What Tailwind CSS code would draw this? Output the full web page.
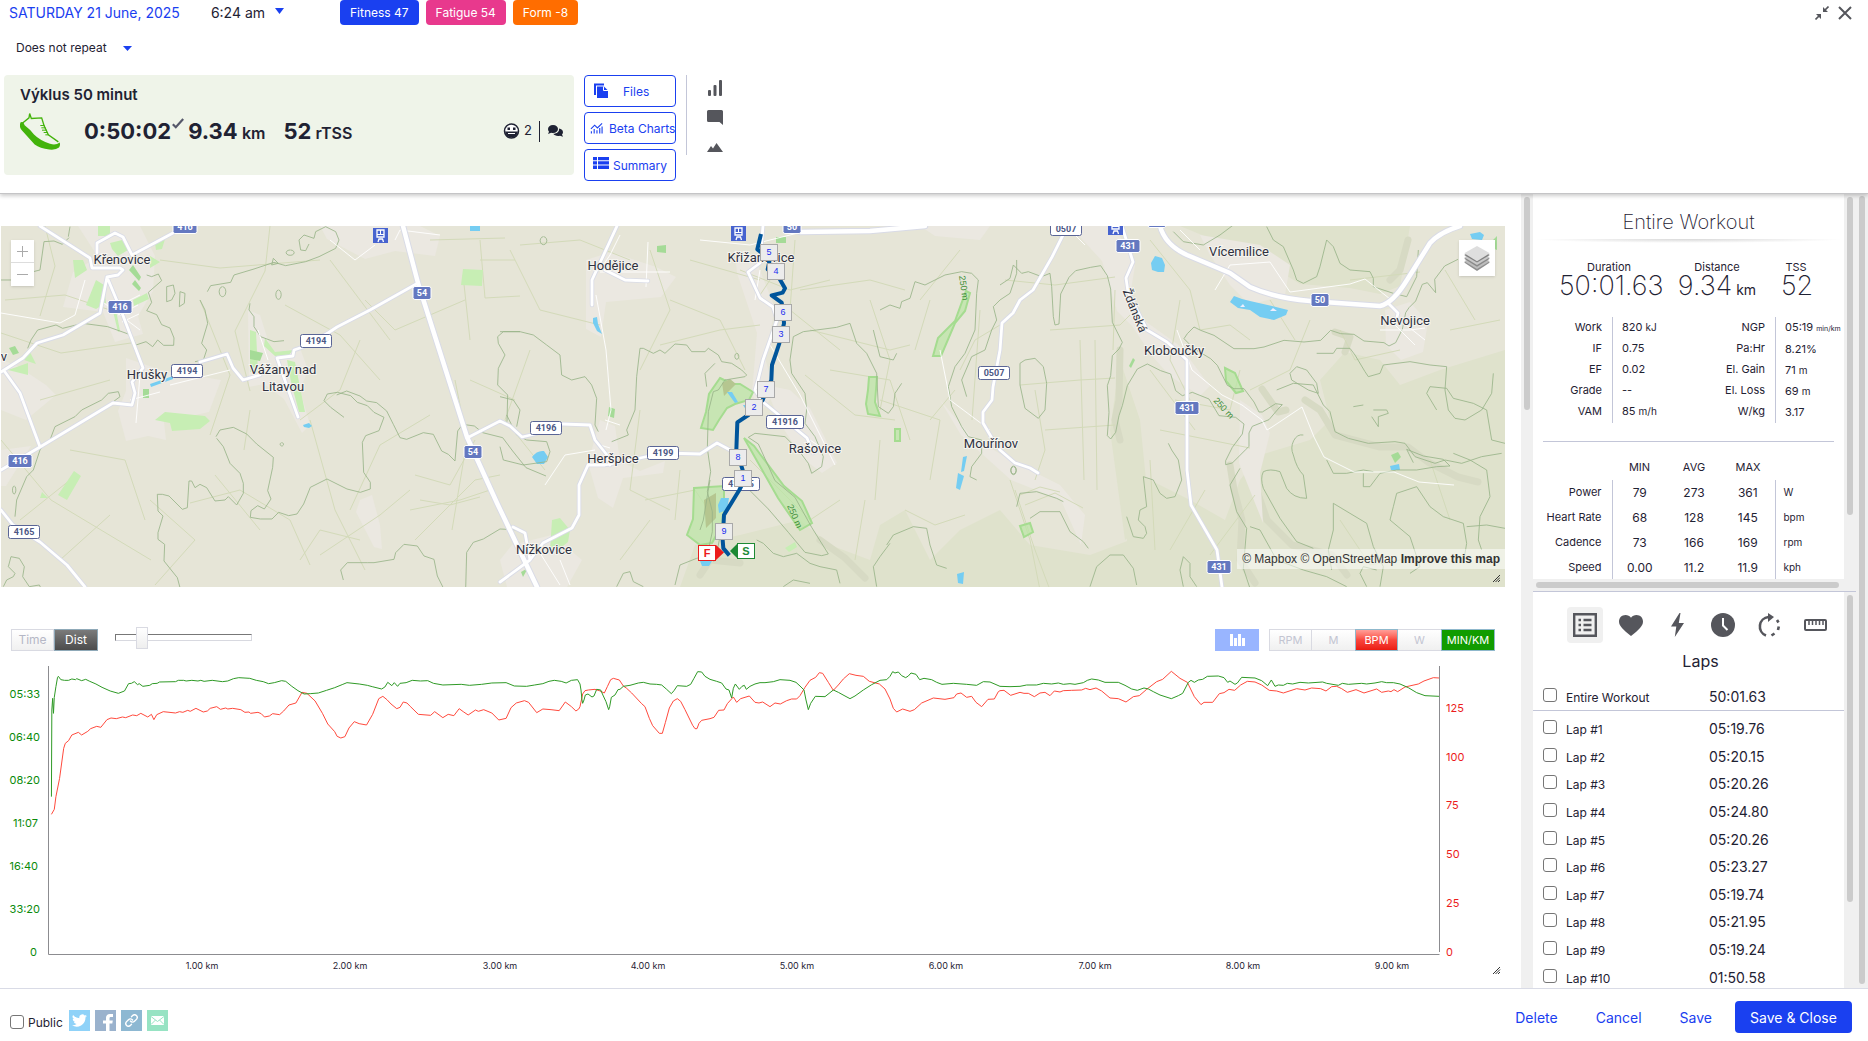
<!DOCTYPE html>
<html lang="en">
<head>
    <meta charset="UTF-8">
    <meta name="viewport" content="width=device-width, initial-scale=1.0">
    <title>Výklus 50 minut</title>
    <script src="https://cdn.jsdelivr.net/npm/@tailwindcss/browser@4"></script>
</head>

<body class="h-screen flex flex-col overflow-hidden bg-white font-['Inter',sans-serif] text-[#1f2233]">
    <header class="relative z-10 shrink-0 h-[194px] border-b border-[#c4c4c6] shadow-[0_2px_4px_rgba(0,0,0,0.2)]">
        <div class="flex items-start">
            <a href="#" class="ml-[9px] mt-[3px] text-sm leading-5 text-[#1a40f0]">SATURDAY 21 June, 2025</a>
            <button class="ml-[31px] mt-[3px] flex items-start text-sm leading-5">6:24 am
                <svg class="ml-2.5 mt-[5px] w-[9px] h-[6px]" viewBox="0 0 9 6" fill="#1a40f0"><path d="M0 0h9L4.500 6z"/></svg>
            </button>
            <div class="ml-14 flex gap-[7px] text-xs leading-[25px] text-white">
                <span class="px-2.5 rounded bg-[#1a40f0]">Fitness 47</span>
                <span class="px-2.5 rounded bg-[#e8398d]">Fatigue 54</span>
                <span class="px-2.5 rounded bg-[#ff6d00]">Form -8</span>
            </div>
            <div class="ml-auto mr-4 mt-1.5 flex gap-[9px] text-[#55565c]">
                <button aria-label="Collapse">
                    <svg class="w-[14px] h-[14px]" viewBox="0 0 14 14" fill="none" stroke="currentColor" stroke-width="1.600"><path d="M13.500.5 9 5M.5 13.500 5 9"/><path d="M8 1v5h5zM6 13V8H1z" fill="currentColor" stroke="none"/></svg>
                </button>
                <button aria-label="Close">
                    <svg class="w-[14px] h-[14px]" viewBox="0 0 14 14" fill="none" stroke="currentColor" stroke-width="2"><path d="M1 1l12 12M13 1L1 13"/></svg>
                </button>
            </div>
        </div>

        <button class="ml-4 mt-[15px] flex items-center text-xs leading-4">Does not repeat
            <svg class="ml-4 w-[9px] h-[5px]" viewBox="0 0 9 5" fill="#1a40f0"><path d="M0 0h9L4.500 5z"/></svg>
        </button>

        <div class="mt-[19px] ml-1 flex items-start">
            <div class="w-[570px] h-[100px] pl-4 pt-[9px] rounded bg-[#eff4e9]">
                <h1 class="text-[15px] leading-[22px] font-semibold">Výklus 50 minut</h1>
                <div class="flex items-center h-[50px]">
                    <svg class="w-10 h-[37px]" viewBox="0 0 120 110" fill="none">
                        <path d="M0 33Q-2 44 6 52L44 94Q60 106 88 109 108 111 117 103 122 96 119 88 108 97 90 92 60 82 42 64 30 48 14 36L10 28Q0 24 0 33z" fill="#43b30b"/>
                        <path d="M7 30 27 14 29 1 34 16 65 14 72 37 85 65 115 86" stroke="#43b30b" stroke-width="4"/>
                        <path d="M61 37h13M64 44h13M66 51h14M71 58h12M76 65h10" stroke="#43b30b" stroke-width="3"/>
                    </svg>
                    <span class="ml-6 text-[22px] font-bold">0:50:02</span>
                    <svg class="ml-px mb-4 w-3 h-[11px]" viewBox="0 0 12 11" fill="none" stroke="#55586a" stroke-width="2.200"><path d="M.8 6.200 3.800 9.200 11.200 1"/></svg>
                    <span class="ml-1 text-[22px] font-bold">9.34 <span class="-ml-px text-base font-semibold">km</span></span>
                    <span class="ml-[18px] text-[22px] font-bold">52 <span class="-ml-px text-base font-semibold">rTSS</span></span>
                    <span class="ml-auto mr-[11px] flex items-center">
                        <svg class="w-[17px] h-4" viewBox="0 0 17 16"><circle cx="8.500" cy="8" r="7" fill="#fff" stroke="#1f2233" stroke-width="1.500"/><path d="M2 8.500h13Q14 14.500 8.500 14.500T2 8.500z" fill="#1f2233"/><path d="M4.500 4.500h2.500v2.500H4.500zM10 4.500h2.500v2.500H10z" fill="#1f2233"/><path d="M5 10.500h7" stroke="#fff"/></svg>
                        <span class="ml-1 text-[13px]">2</span>
                        <span class="ml-[7px] h-[21px] w-px bg-[#1f2233]"></span>
                        <svg class="ml-2 w-[15px] h-3" viewBox="0 0 15 12" fill="#1f2233"><path d="M5 0c3 0 5 1.800 5 4s-2 4-5 4c-.6 0-1.200 0-1.800-.2L0 9l1-2.200C.3 6 0 5 0 4c0-2.200 2-4 5-4z"/><path d="M11 3.500c2.300.3 4 1.800 4 3.700 0 .9-.4 1.700-1 2.300l1 2.300-3-1c-3 .7-5.700-.3-6.700-2C9 8.600 11.500 6.700 11 3.500z"/></svg>
                    </span>
                </div>
            </div>
            <div class="ml-2.5 w-[92px] flex flex-col gap-[5px] text-xs text-[#1a40f0]">
                <button class="h-8 pl-2 flex items-center rounded border border-[#1a40f0]">
                    <svg class="w-4 h-4" viewBox="0 0 16 16"><path d="M2 12V1.500H11" fill="none" stroke="#1a40f0" stroke-width="2"/><path d="M4 3.500h7l4 4V15H4z" fill="#1a40f0"/><path d="M10.500 3.500v4H15" fill="none" stroke="#fff"/></svg>
                    <span class="ml-3.5 pt-0.5">Files</span>
                </button>
                <button class="h-8 pl-[5px] flex items-center whitespace-nowrap rounded border border-[#1a40f0]">
                    <svg class="shrink-0 w-[13px] h-3" viewBox="0 0 14 12" fill="none" stroke="#1a40f0" stroke-width="1.200"><path d="M1 7l4-4 3 3 5-5M1.500 12V9.500M4.500 12V7M7.500 12V8.500M10.500 12V6M13 12V4.500"/></svg>
                    <span class="ml-1.5 pt-0.5">Beta Charts</span>
                </button>
                <button class="h-8 pl-2 flex items-center rounded border border-[#1a40f0]">
                    <svg class="mb-1 w-4 h-3" viewBox="0 0 16 12" fill="#1a40f0"><path d="M0 0h4v3.300H0zM5 0h11v3.300H5zM0 4.300h4v3.300H0zM5 4.300h11v3.300H5zM0 8.600h4V12H0zM5 8.600h11V12H5z"/></svg>
                    <span class="ml-1 pt-0.5">Summary</span>
                </button>
            </div>
            <div class="ml-2.5 h-20 w-px bg-[#c3c6d8]"></div>
            <div class="ml-5 mt-[5px] flex flex-col items-center gap-3.5 text-[#55565c]">
                <button aria-label="Charts"><svg class="w-4 h-4" viewBox="0 0 16 16" fill="currentColor"><rect x="1" y="10" width="3" height="6" rx="1"/><rect x="6.500" y="5" width="3" height="11" rx="1"/><rect x="12" y="0" width="3" height="16" rx="1"/></svg></button>
                <button aria-label="Comments"><svg class="w-4 h-[15px]" viewBox="0 0 16 15" fill="currentColor"><path d="M1.500 0h13Q16 0 16 1.500V15l-3.500-3h-11Q0 12 0 10.500v-9Q0 0 1.500 0z"/></svg></button>
                <button aria-label="Map" class="pt-1"><svg class="w-4 h-[9px]" viewBox="0 0 16 9" fill="currentColor"><path d="M0 9l4-6 2 2.500L9.500 0 16 9H8.500L6.700 5.500 9 9z"/></svg></button>
            </div>
        </div>
    </header>

    <main class="flex-1 min-h-0 flex">
        <div class="flex-1 min-w-0 overflow-hidden">
            <section aria-label="Map" class="relative mt-8 ml-px mr-4">
                <svg id="map" class="block w-full" viewBox="1 226 1504 361" font-family="Roboto, sans-serif">
                    <defs>
                        <g id="minor-roads">
                            <path d="M40 226 90 258 92 268 120 268 123 270 118 275 107 277M97 253V243L115 233 123 237 132 255 173 233M107 277 122 313 143 368 132 382 135 393 132 405 113 403 40 447 1 470M107 277 100 313 63 335 37 343 23 358 1 372M5 372 20 393 40 447M1 510 13 525 40 542 67 565 85 587M200 362 227 354 233 368 243 380 260 375M298 417 277 358 293 356 294 350 303 347 328 333 337 327 370 310 418 283M467 438 500 421 510 426 522 437 535 434 562 424 590 425 595 440 607 455 610 465M588 465 605 465 640 458 663 453 700 454 717 443 730 450M588 465 579 485V515L572 528 543 543 530 560 500 582M513 527 525 533 530 560M617 226 592 280V305M605 270 625 280 648 281M763 226 760 263 748 272 760 298 773 307 777 320 763 360 758 380 755 390 763 402 807 438 813 453"/>
                            <path d="M1066 229 1052 257 1033 290 1020 300 1013 313 1002 323 1000 350 993 387 992 400 983 412V423L993 440 1000 450 1015 463 1030 468 1038 473M1122 226 1133 262 1126 278 1128 292 1147 330 1167 342 1187 360V470L1191 505 1217 550 1222 587M1388 303 1398 313 1396 321"/>
                        </g>
                        <path id="major-roads" d="M403 226 418 283 467 437 497 503 537 587M800 232 870 231 925 226M1160 226Q1165 245 1187 255L1230 273 1250 287Q1275 298 1310 301L1380 306Q1393 303 1407 280L1430 243Q1440 232 1460 226M866 226"/>
                    </defs>
                    <rect x="1" y="226" width="1504" height="361" fill="#e6e5d7"/>

                    <!-- forest tint -->
                    <g fill="#dfe2cc">
                        <path d="M1505 350 1440 370 1400 385 1380 360 1345 352 1320 380 1330 420 1310 440 1260 455 1240 480 1225 520 1190 500 1130 470 1125 587H1505z"/>
                        <path d="M680 587 695 545 740 535 800 520 830 545 870 560 880 525 905 510 930 560 960 530 1000 510 1030 545 1090 555 1130 540 1130 587z"/>
                        <path d="M1120 360 1140 420 1150 520 1125 540 1110 430z"/>
                        <path d="M1180 226h230l-10 60-20 8-30-6-50-4-40-25z"/>
                    </g>
                    <g fill="none" stroke="#d7dac4" stroke-width="7" stroke-linecap="round" stroke-linejoin="round">
                        <path d="M1120 350 1119 400 1115 420 1120 440M1230 465 1234 490 1242 520 1240 560 1255 583M1262 389l16 23 8-2M1305 400l15 10 15 25 45 12 28 0 20 15 30 15 20 5"/>
                        <path d="M1255 485l12 35 25 25 40 10 15 20M1335 332l15 5-5 15M1408 240l-8 30-10 10M820 540l25 18 20 20M700 575l10-15 30 3"/>
                    </g>

                    <!-- built-up areas -->
                    <g fill="#ebe8e1">
                        <path d="M78 226h62l15 30-2 35-15 25 5 18-28 8-12-30-40-5 10-35 25-15z"/>
                        <path d="M126 358l35 12 60 10-12 32-45 10 2 18-18-4-22 5-8-30 8-20z"/>
                        <path d="M248 310l12 5 12 38 28-5 8 22-8 20 10 35-8 8-18-34-20-15-15 3z"/>
                        <path d="M320 226h100l20 10-5 20-40-5-30 8-38-20z"/>
                        <path d="M360 500l12-5 8 30 2 24-8-2-18-35z"/>
                        <path d="M500 560l12-15 40-10 30 25-15 27h-60z"/>
                        <path d="M586 260l25-8 45 15 20 10-15 20-55 5-5 35-15-8z"/>
                        <path d="M600 420l15 6 5 35 20 10 25-10-2 12-40 5-10 30-15-10-10-35z"/>
                        <path d="M735 250l20 8 20 50-10 50 10 35-15 20-8-20 5-60-20-60z"/>
                        <path d="M765 385l25 5 20 18 15 30 12 25-15 10-20-15-22-35z"/>
                        <path d="M940 400l30 35 40 25 50 25 25 30-4 30-20-45-50-20-50-45z"/>
                        <path d="M1070 226h45l20 40-5 30 15 25 35 25 30 40-10 10-30-20-18-20-20-30-15-15-15-50z"/>
                        <path d="M1200 235l60 10 30 20-5 30-35 10-20-20-20-30z"/>
                        <path d="M1385 310l25-8 18 20-5 30-22 8-15-15z"/>
                        <path d="M1240 400l22 15 8 18-10 40 3 50-14-35-10-25z"/>
                        <path d="M920 226h70l-10 14-45-4z"/>
                        <path d="M1 450l30-4-25 40-5 0zM1 360l15 5 30 20 10 10-30 25-25-10z"/>
                    </g>

                    <!-- field boundaries -->
                    <g fill="none" stroke="#d3dab9" stroke-width="1">
                        <path d="M45 226l10 40-15 50M1 333l60 20 70-10M160 260l60 8 100-8M200 300l30 75-20 60M270 226l-5 45-30 60 15 60M70 450l55 10 20 60M1 440l50 60 100 60M150 500l45 40-40 45M190 503l50-13 50 30 20 45M215 475l45 55M330 260l60 80M365 300l30 30 70-30M285 305l55 30 40 45M300 420l40-30 20-50M310 420l25 90 30 60M350 510l30-65 50-30M415 475l35 10 25-45M410 510l50-10 30-10M320 555l60-40 30-25M455 380l12 60-15 90M430 240l75-2M463 275l7 65M480 240l5 58 35-2"/>
                        <path d="M510 250l30 60 60 15M530 350l-25 70 40 50M520 245l60-5 50 20M650 250l20 60-30 60M670 300l50 20 25 50M690 260l70 20M660 345l60-15 40-5M640 410l-10 80 40 20M645 500l50-10 20 30M680 470l-5 50M740 270l50 20 40-10M795 240l-5 70 50 40M800 290l70-10 35 10M810 330l80 20 20-5M830 370l60 10 20 60M805 375l50 40 40 5M870 300l20 60-10 50M880 400l60 20-10 60M750 460l60 60 30-20M880 440l-5 60M960 250l-40 50M930 300l-15 50M980 310l-8 110M955 390l-25 30"/>
                        <path d="M1005 280l50 5 60-8M1050 330l70-5 10-10M1020 385l60-5 35-2M1045 430l70-5M1080 340l4 140M1095 340l2 150M1115 290l-2 60M1035 390l10 60-10 30M1150 370l45 60M1180 300l-10 60 20 40M1200 330l30-5 20 15M1270 300l25 40M1240 370l-10 40-55-10M1310 320l-20 50-40 20M1350 280l70-8M1340 330l15 30 45-10M1445 270l30 50M1150 240l40 50 10 40M1160 430l90 18M1150 460l5 90M1170 550l35-60M1210 555l45-60M1430 460l20 60M1340 520l30 45 60-10M1450 330l50-10M1010 480l20 60 10 50M1015 490l20 60 15 40M1020 495l20-8 20 5M1025 505l30-12 28 15"/>
                        <path d="M415 540l60-60 25-5M420 500l30 5 30-8M300 560l20-30 40 10M20 520l50-40M60 560l50-45M250 410l-6 40M480 260l35 0M470 380l45 20M5 300l60-5 60 20M40 400l70-20M620 560l30-40M855 560l10-60M905 510l30 15 30-10M960 370l15-30 25-15M780 265l-20 30"/>
                    </g>

                    <!-- parks -->
                    <g fill="#c7eeb4">
                        <path d="M98 226h12v10l-12 0zM110 243l12-3 6 10-10 6-6-7zM73 260l10 0 4 10-12 8zM96 280l8 5 2 18-10 6-10-4z"/>
                        <path d="M155 243l10-4-3 10-6 1zM150 256l10 6-10 6zM133 300l14-7 2 6-15 7zM110 300l16-8M115 305l5 26-2 1-6-25zM8 370l20-7 0 12zM30 352l6 12-12-4z"/>
                        <path d="M250 330l6 2 2 40-8 0zM265 338l10 14 18-2-4 5-14 1-11-10zM287 360l8 2 10 50-6 0-8-30z"/>
                        <path d="M155 420l10-8 40 4 5 5-10 8-28 2-2-8zM58 495l16-24 7 5-14 24zM42 492l6 6-8 0zM461 285l2-16 20 1-1 16z"/>
                        <path d="M552 520l8-2 10 12-2 12-10 8-8 0zM785 548l10-6 2 5-8 5z"/>
                    </g>
                    <g fill="#a5db97"><path d="M129 270l4-5 8 12-2 4zM132 284l3-4 6 8-2 3zM250 350l13 3-3 8-10-2zM143 389h6v9h-6zM9 348l6-2 4 7-6 2zM657 246l9-1v8l-9-1zM609 407l6 2-1 9-6-2zM521 572l7-4-5 9zM776 237h10v6h-10zM1129 366l4-8 2 2-4 8zM1391 455l7-3 3 5-6 6zM1492 241l5-5v14l-5-2z"/></g>

                    <!-- protected woodland -->
                    <g fill="#b9e6a4" fill-opacity=".7" stroke="#a5dc90" stroke-width="2">
                        <path d="M720 378l12 6 8 0 13 8-4 8-14 4-8 4-8 12-6 10-12-2 5-16 3-18z"/>
                        <path d="M744 438l10 8 30 40 18 15 10 22-12 7-22-32z"/>
                        <path d="M694 488l30-2 0 35-12 22-12 2-13-10 6-16z"/>
                        <path d="M966 291l4 2-5 18-10 12-14 33-8 0 5-18 17-17z"/>
                        <path d="M869 377l8 0-2 25 5 14-12-2-2-10 2-14zM895 429h5l0 12-5 0z"/>
                        <path d="M1225 368l10 5 8 18-7 2-10-12zM1020 526l10-3 3 9-9 5z"/>
                    </g>
                    <path d="M704 500l12-7 0 25-10 10zM722 383l8-4 6 5-12 12z" fill="#b5c690"/>

                    <!-- water -->
                    <g fill="#75cdf2">
                        <path d="M150 384l23-8v3l-22 8zM303 425l6-2 3 3-3 2-5-1zM470 226h10v5h-10zM532 457q5-7 12-6l4 6-4 7-7 0zM593 318l4-1 1 7 4 10-5-3-4-8z"/>
                        <path d="M727 392l5 0 6 10-3 1zM743 405h5v8zM721 498l8 0-2 12-8 3-1-8zM700 561h12l-3 5-7 0zM963 457l4-1-3 15-3 1zM958 473l6 3-4 14-4-2zM957 574l7-2-1 12-5-1z"/>
                        <path d="M1230 302l4-6 8 3 8 2 22 5 16 4-2 5-12 5-14-3-10-7-12-2zM1151 263l4-7 7 2 3 7-1 7-6 0-6-2zM1470 234l10-2 4 3-2 5-10-1zM1390 466l9-2 1 6-9 0z"/>
                    </g>
                    <path d="M1240 307h5l-2-3zM1270 311h7l-4-3z" fill="#eeeeff"/>

                    <!-- contour lines -->
                    <g fill="none" stroke="#97b388" stroke-linejoin="round">
                        <g transform="translate(0 220) scale(.333333)" stroke-width="2.500">
                            <path d="M0 180h50l30-20 40-10 12-85 30-2 25 10 20-20M205 50l5-30M440 165l15 5 20-8 10 20-40 35 10 30-15 25 30 12 15 30 25 10 12 30-1 22-30 0-18-16-15 20-20-15-30 10-15-30-70-25-75-10-60 15-20-10-55 15-20 30-10 25M600 240l15 30 8 40-18 60 15 20-10 30-25 5M622 215l10-18 60-10 10-22 60-18 60-20 35 10 60-12 40-15 50-25 10-25-10-25-30-15-30 15-5 20-30-10-15 15 5 30 15 2 10-20M750 250l-3 20 15 20 0 30 20 30 40 15 30-3"/>
                            <path d="M648 650l12-20 40-8 40 20 30 30 50 40-2 30-15 70 10 25-20 30-20-10-20 15-2 20 30 5 35 0 20-20 30 10 25-5 20-30 20-50 50-25 60 30 40 10 30-10 0-20-20-30-4-90 10-20 40-15 15-40-30-15-20-20-30-10-20-20-40-10-30 5-10 20 20 20 40 30M1010 525l30-12 40 15 20 15 30 5 30 25 20 40 20 40 20 5 50-20 30 5 25 50 20 10 20 20 8-90 15-20 35 5 25 20 60 15 30 40 40 50 60 25"/>
                            <path d="M650 655l20 25 20 50 30 30 10 30 0 30-20 35-25-25-10 10-30 3-25-40-20-10-15 10-10-20-8 0-5 80-15 5-40-40-20-5-15 0 2 50 15 15-15 50 0 20 20 15-2 50 40 50 8 30-50 10-20 40M1560 335h-50l-17 15 2 20 20 35-20 40-2 50 30 30-2 80M1560 930l-60-3-50 30-30 10-20 30-3 110M1030 1080l-8-30 20-22 60 0 20 0 60-10 5-20 25-25 40 5 20 30 30 10 10 50 20 40M45 890l5-50 30-70 20-20 20-60 30-30 15-40 60-30 20-20 60-30 20-20 30-5 5 15-20 15M10 1100l10-20 20-10 5-10-20-20 8-30 25 5 15 25-5 30 20 30 30-5 10 20"/>
                            <path d="M667 200a10 15 0 1 0 1 0M820 115l15 15-20 5zM870 90a12 8 0 1 0 1 0M835 210a8 14 0 1 0 1 0M845 668a5 5 0 1 0 1 0M42 798a5 12 0 1 0 1 0M500 200l20-5 5 25-10 20-15 5zM540 215l15 5-2 30-15 10z"/>
                        </g>
                        <g transform="translate(500 220) scale(.333333)" stroke-width="2.500">
                            <path d="M0 335h60l40 10 40 30 40 30 5 60 30 15 40-10 20 25 15 40-5 80 10 20M335 665l50-20-5-15 25-60 5-100 10-85 10 0 30 15 20-10 15 10 30-28 35 3 15 20 40 0 10-10 30 20 10 20 30 5 30 20 15 15-5 5-60 10-20 30-15 5-15 60-3 110 10 70-10 60 15 60 0 60-15 70 20 20M710 400a6 9 0 1 0 1 0M870 420l10-70 30-15 40-5 60-8 40-12 20 60 30 30 30 60 5 100 30 20 15-20 5-40 20-30M870 420l5 40 40 60 5 50-5 40 30 40 25 60-5 30-30 20-10-30-30-40-40-40-90-10-20 12 30 20 50 110 60 50 50 90 50 80-20 5-50-10-50-60-60-70-60-60-30 5M1140 270l30-15 30 10 5-20 25-10 15-50 30 10 60-30 50-10 30 5 20 20-5 40-5 110-30 70-30 40-20 60 10 60 30 60 20 30 40 10 0 40-30 40-5 30 20 10"/>
                            <path d="M0 530l40 10 20 30-10 50M0 680l10 40 60 15 70-10 10-30-10-30-60-5-30-15-30-60M130 50a10 12 0 1 0 1 0M620 500l-5-40 30-30M630 780l-20 120-10 30M660 950l-10 50-60 15-50 20-15 60M770 960l20 10 30 30 30 10 40-10 40 30 30 10 50 10 10 40M1160 975l20-30 60-25 40 5 10 50 20 60 30 10M1130 1100l-10-60 20-30 30-40M1400 530l-15-50 30-70 40-20 20-60 15-30-10-40 20-20 30-20 20-60 0-40M1190 400l-10 20-40-10-20-80M1540 740a8 12 0 1 0 1 0M850 1100l30-20 50 10M350 1100l20-40 20-5 10 30 30 15"/>
                        </g>
                        <g transform="translate(1000 220) scale(.333333)" stroke-width="2.500">
                            <path d="M0 195l30-20 10-40 25 25 20-5 40 15 25-10 5 40 5 90 5 25 12-3 5-90 25-50 20-20 45-10 30-5 20 30 10 40 5 100 30 60-10 20-20 20-5 60-10 30 5 80-5 70 10 10 15-20 10-50 10-30 15-60 30-50 30-15 40 20 30 10 15 50 20 15 30-10 50 20 30 50 50 5 25 20-5 30-30 40-20 40 0 12 20-5 40-40 10-10 0-40 10-20 50-20 30-35 10-10-20-3-40 25-10 0-15-30-30-40-30 0-20-10-30-60-20-20-50-30-30-30 10-15 20-20 20 10 40 15 60 40 60 0 30-5 60-20 60 5 50-5 30-30 30 10 40 2 30 20 60 5 15 10 20-10 20-40 10-50 10-15 20-20 20-50 15-5 25 30-3-40 30-40 40-20M520 35l30 30 60 10 50-30 40-30M800 20l20 40 30 20 30 70 10 30 20 10 40-20 10-30 20-80 20 20 20 50 30 20 60 5 10 20 0 25 60 20 40 10 30-60 5-80"/>
                            <path d="M870 460l20-20 30 10 30 40 5 30-30-10-50-30zM950 400l50 0 10-15 40 0 15 20 30 50 10 15 35-10 10-25 80-10 60 10 50 5-5 70 10 60 20 25 30 5 50-30 30-50 5-60M830 510l50-20 60 5 30 60 20 20 15 60 40 20 60 15 80-5 30 5 30 40 60 20 30-10 50 10 60-20 60-10M1060 560l30-5M1120 570l40 0 5 10-30 10 0 30-20-30M1515 670l-40-10-15-90-40-20-60-15-20-30-50-5-10 20 30 50M980 720l20 40 40 0 50-10 30 5M1090 760l0 40 20 0 30-40 50-10 60 0 60-10 40-2-20-20-60-10-50-20 20 40M1360 700l50 20 50 30 10 80-30 60-5 70 10 30M720 745l-30 50 20 80 30 50-5 60-5 60 20 60 30 30M750 920l30 10 50 90 80 30 70 20 60 30"/>
                            <path d="M910 645a30 40 0 0 0-30 60q10 40 30 60l10 70q-40 0-60-30l-20-50q-30-10-50 0-10 20 0 50l50 90 50 70 50 20M1000 850l50 30 50 30 20 70 30 60-10 60M1000 850l0 80-15 60 10 60M1180 860l-10 40 60 50 30 90-30 20M1180 860l10-40 60-20 40 60 40 30 60 20 10 60-10 60M1400 920l60-5 55 10M430 770l10 90-20 10-5 30 20 20 5 20-10 15-30-5-20-60M430 770l30 10 20 40 20 15 25-5 20-50-10-60-20-30-10-20M60 430l15-10 30-5 25 25 10 50-5 80-20 25-40-30-15-70zM90 895l30-20 60 0 30 60 40 30 15 20M50 860l10-40 50-5 60 20 20 10M40 738a8 12 0 1 0 1 0M270 1100l20-60 40-35 40 0 30 40 10 50M550 1100l-10-50 10-40 20 20 0 40 20 30M1100 1100l-20-40 10-20 40 10"/>
                        </g>
                    </g>

                    <!-- small lanes -->
                    <g fill="none" stroke="#fff" stroke-width="1" stroke-opacity=".9">
                        <path d="M85 280l-10 35-15 8-59-10M110 310l30-15M118 315l20-10M122 322l17-8M100 300l40 30M140 375l-4 48M130 400l30-8M170 385l60-15M258 330l10 30M600 272l40 0 30 0M648 242l-2 45M620 235l-10 20-10 15M596 295l10 55 5 60-5 20M605 420l15 5M600 445l10 3M545 485l20-30 30-5M535 545l25 40M560 560l10 25M770 345l30 50 20 40 15 30M810 440l15 10M940 350l10 50 40 30M1215 290l15-25 40-3 20 30 60-8 15-5 25 20M1180 230l20 20M1177 330l15 40 30 25 20 10 20 15 5 10 5-3 30-20 12 30 10 20 30 15 40 0 25 10 35 3M1380 330l30 0 15-2M1395 325l20 20M1400 320l25 20M330 240l25 20 20-15M395 240l5-10 40 5M1075 235l10 10M700 240l50 5 60-15M760 270l-5 30"/>
                    </g>

                    <!-- roads -->
                    <g fill="none" stroke-linejoin="round" stroke-linecap="round">
                        <use href="#minor-roads" stroke="#d9dbe6" stroke-width="4.500"/>
                        <use href="#major-roads" stroke="#d9dbe6" stroke-width="6.500"/>
                        <use href="#minor-roads" stroke="#fff" stroke-width="2.800"/>
                        <use href="#major-roads" stroke="#fff" stroke-width="4.500"/>
                    </g>

                    <!-- place names -->
                    <g fill="#2f3140" stroke="#f5f4ef" stroke-width="2" paint-order="stroke" font-size="13" text-anchor="middle">
                        <text x="122" y="264">Křenovice</text>
                        <text x="147" y="379">Hrušky</text>
                        <text x="283" y="374">Vážany nad</text>
                        <text x="283" y="391">Litavou</text>
                        <text x="4" y="361">v</text>
                        <text x="613" y="270">Hodějice</text>
                        <text x="761" y="262">Křižanovice</text>
                        <text x="613" y="463">Heršpice</text>
                        <text x="815" y="453">Rašovice</text>
                        <text x="544" y="554">Nížkovice</text>
                        <text x="991" y="448">Mouřínov</text>
                        <text x="1239" y="256">Vícemilice</text>
                        <text x="1405" y="325">Nevojice</text>
                        <text x="1174" y="355">Kloboučky</text>
                        <text transform="translate(1131 312) rotate(68)" font-size="12">Ždánská</text>
                    </g>
                    <g fill="#3f8f3a" font-family="Liberation Sans, sans-serif" font-size="9">
                        <text transform="translate(959 276) rotate(82)">250 m</text>
                        <text transform="translate(787 506) rotate(66)">250 m</text>
                        <text transform="translate(1213 401) rotate(47)">250 m</text>
                    </g>
                    <g id="shields" font-size="9" font-weight="700" text-anchor="middle"></g>
                    <g id="station"><rect x="373" y="228" width="15" height="15" fill="#4763cf"/><path d="M377 230h7v7h-7zM378 242l1-3h3.500l1 3" fill="none" stroke="#fff" stroke-width="1.300"/><path d="M380.500 230v4M377 234.500h7" stroke="#fff"/></g>
                    <use href="#station" x="358" y="-2"/>
                    <use href="#station" x="735" y="-8"/>

                    <!-- recorded track -->
                    <polyline transform="translate(500 220) scale(.333333)" points="783,42 772,88 800,110 808,125 803,148 835,170 855,205 848,218 815,226 845,248 850,275 852,310 838,370 828,400 816,435 814,480 800,510 788,540 745,585 712,607 709,690 728,750 728,790 718,810 672,885 668,960 670,985 688,1006" fill="none" stroke="#00559b" stroke-width="12" stroke-linejoin="round"/>
                    <g id="splits" font-family="Liberation Sans, sans-serif" font-size="9" text-anchor="middle"></g>
                    <g font-family="Liberation Sans, sans-serif" font-size="11" font-weight="700" text-anchor="middle">
                        <path d="M716 545l8 7.500-8 7.500z" fill="#ec1c1c"/><rect x="698.500" y="545.500" width="17" height="15" fill="#fff" stroke="#ec1c1c"/><text x="707" y="557" fill="#ec1c1c">F</text>
                        <path d="M738 543l-8 8 8 8z" fill="#1d8a34"/><rect x="737.500" y="543.500" width="17" height="15" fill="#fff" stroke="#1d8a34"/><text x="746" y="555" fill="#1d8a34">S</text>
                    </g>
                </svg>
                <div class="absolute left-2.5 top-3.5 w-[23px] flex flex-col bg-white shadow">
                    <button aria-label="Zoom in" class="h-[23px] flex items-center justify-center border-b border-[#dddddd]"><svg class="w-[11px] h-[11px]" viewBox="0 0 11 11" stroke="#aaaaaa"><path d="M5.500 0v11M0 5.500h11"/></svg></button>
                    <button aria-label="Zoom out" class="h-[23px] flex items-center justify-center"><svg class="w-[11px] h-[11px]" viewBox="0 0 11 11" stroke="#aaaaaa"><path d="M0 5.500h11"/></svg></button>
                </div>
                <button aria-label="Layers" class="absolute right-2.5 top-3.5 w-9 h-9 flex items-center justify-center bg-white shadow">
                    <svg class="w-[26px] h-[25px]" viewBox="0 0 78 76"><path d="M0 50l39 26 39-26-39-20z" fill="#8f8f8f"/><path d="M0 46l39 24 39-24-39-20z" fill="#bdbdbd"/><path d="M0 39l39 24 39-24-39-20z" fill="#8a8a8a"/><path d="M0 34l39 24 39-24-39-20z" fill="#c9c9c9"/><path d="M0 27l39 23 39-23-39-22z" fill="#808080"/><path d="M0 22l39 24 39-24L39 0z" fill="#dedede"/></svg>
                </button>
                <p class="absolute right-0 bottom-[18px] h-5 px-[5px] bg-white/50 font-['Liberation_Sans',sans-serif] text-xs leading-5 text-[#333]">
                    <a href="#">© Mapbox</a> <a href="#">© OpenStreetMap</a> <a href="#" class="font-bold">Improve this map</a>
                </p>
                <svg class="absolute right-[5px] bottom-[5px] w-[7px] h-[7px]" viewBox="0 0 7 7" stroke="#333"><path d="M0 7l7-7M2.500 7L7 2.500M5 7l2-2"/></svg>
            </section>

            <section aria-label="Chart" class="ml-px mr-4 mt-[42px]">
                <div class="flex items-start h-[31px] px-2.5 text-[11px]">
                    <div class="flex h-[22px]">
                        <button class="w-[43px] border border-[#d9dae2] bg-linear-to-b from-white to-[#f0f0f0] text-[#b5b7c6] text-xs">Time</button>
                        <button class="w-11 border border-[#8fa9b8] bg-linear-to-b from-[#7b7b7b] to-[#4c4c4c] text-white text-xs">Dist</button>
                    </div>
                    <div class="relative ml-[17px] mt-[5px] w-[137px] h-[7px] border-t border-l border-t-[#777] border-l-[#777] border-b border-r border-b-[#d8d9e0] border-r-[#d8d9e0]">
                        <input type="range" aria-label="Smoothing" value="18" class="absolute inset-0 w-full opacity-0">
                        <span class="absolute left-5 -top-2 w-3 h-[22px] border border-[#d9dae2] bg-linear-to-b from-white to-[#eeeeee]"></span>
                    </div>
                    <button aria-label="Bar chart" class="ml-auto w-11 h-[22px] flex items-center justify-center bg-[#99b5ff]">
                        <svg class="w-[15px] h-3" viewBox="0 0 15 12" fill="#fff"><path d="M0 0h3v12H0zM4 4h3v8H4zM8 0h3v12H8zM12 4h3v8h-3z"/></svg>
                    </button>
                    <div class="ml-2.5 flex h-[22px]">
                        <button class="w-[43px] border border-[#d9dae2] bg-linear-to-b from-white to-[#f0f0f0] text-[#c3c5d2]">RPM</button>
                        <button class="w-[43px] border-y border-[#d9dae2] bg-linear-to-b from-white to-[#f0f0f0] text-[#c3c5d2]">M</button>
                        <button class="w-[43px] border border-[#8fb8cc] bg-linear-to-b from-[#ff9d98] via-[#f9453c] to-[#ea1a10] text-white">BPM</button>
                        <button class="w-[43px] border-y border-[#d9dae2] bg-linear-to-b from-white to-[#f0f0f0] text-[#c3c5d2]">W</button>
                        <button class="w-[54px] border border-[#8fb8cc] bg-[#119c00] text-white">MIN/KM</button>
                    </div>
                </div>
                <svg class="block w-full" viewBox="1 660 1504 320" font-family="Inter, sans-serif" font-size="11">
                    <path d="M48.500 666v288.500h1391M1439.500 666v286" fill="none" stroke="#8c8c90"/>
                    <g fill="#0a8a0a" text-anchor="end">
                        <text x="40" y="698">05:33</text><text x="40" y="741">06:40</text><text x="40" y="784">08:20</text><text x="38" y="827">11:07</text><text x="38" y="870">16:40</text><text x="40" y="913">33:20</text><text x="37" y="956">0</text>
                    </g>
                    <g fill="#ec1c1c">
                        <text x="1446" y="712">125</text><text x="1446" y="761">100</text><text x="1446" y="809">75</text><text x="1446" y="858">50</text><text x="1446" y="907">25</text><text x="1446" y="956">0</text>
                    </g>
                    <g fill="#1f2233" font-size="9" text-anchor="middle">
                        <text x="202" y="969">1.00 km</text><text x="350" y="969">2.00 km</text><text x="500" y="969">3.00 km</text><text x="648" y="969">4.00 km</text><text x="797" y="969">5.00 km</text><text x="946" y="969">6.00 km</text><text x="1095" y="969">7.00 km</text><text x="1243" y="969">8.00 km</text><text x="1392" y="969">9.00 km</text>
                    </g>
                    <g fill="none" stroke="#ff4a3d">
                        <polyline vector-effect="non-scaling-stroke" transform="translate(0 610) scale(.408163 .333333)" points="126,613 133,598 137,560 146,505 156,415 160,400 168,392 176,375 192,367 200,375 215,364 222,356 237,349 247,352 262,329 272,324 285,326 300,321 308,323 325,315 335,317 345,310 362,321 371,313 377,329 384,314 400,305 430,309 440,305 448,307 460,301 466,304 480,295 498,306 508,303 515,295 531,290 540,298 553,294 558,297 570,295 590,299 600,307 610,306 614,310 632,307 640,311 648,321 660,318 668,311 685,314 695,303 708,285 725,279 740,247 752,250 772,273 790,310 803,342 820,365 826,379 835,384 845,380 855,354 868,335 880,341 898,345 913,313 928,266 938,259 948,269 958,282 972,296 980,292 988,276 997,279 1005,289 1025,313 1055,316 1065,305 1085,323 1098,313 1112,317 1125,296 1135,305 1147,315 1165,300 1172,304 1185,299 1205,309 1222,330 1240,325 1252,293 1265,279 1285,272 1295,277 1315,308 1330,297 1350,299 1370,302 1385,276 1400,290 1411,303 1418,297 1421,290"/>
                        <polyline vector-effect="non-scaling-stroke" transform="translate(560 610) scale(.333333)" points="60,290 68,252 75,242 85,240 105,238 118,242 133,249 142,230 152,209 160,205 178,210 190,228 200,235 215,249 245,281 255,290 268,325 278,347 298,370 307,370 316,338 328,294 340,273 352,266 362,274 375,299 398,346 405,356 411,356 417,340 425,331 450,326 462,322 476,301 492,300 502,281 520,261 530,277 542,266 568,258 585,277 597,279 608,276 630,290 645,279 661,282 680,272 695,267 710,267 720,257 735,232 750,211 767,202 778,188 788,190 805,217 820,241 835,225 850,207 868,191 888,196 910,199 928,214 958,222 975,237 990,267 1000,295 1010,306 1028,297 1050,304 1063,299 1085,279 1120,264 1155,268 1182,263 1190,252 1203,249 1220,262 1235,259 1248,277 1265,290 1284,268 1303,267 1315,245 1320,242"/>
                        <polyline vector-effect="non-scaling-stroke" transform="translate(1000 610) scale(.333333)" points="0,242 12,241 32,256 60,247 72,250 85,250 103,260 120,249 135,247 150,257 163,243 180,246 190,242 215,241 245,240 257,235 270,239 288,234 305,243 330,264 355,266 378,276 400,260 418,257 440,238 470,215 488,208 514,184 540,205 562,217 583,260 603,284 612,277 638,277 658,251 672,248 687,238 704,241 722,225 742,214 765,216 785,225 808,241 830,243 850,249 890,236 915,240 935,234 962,236 978,243 995,230 1010,229 1025,236 1042,247 1068,239 1092,249 1130,237 1145,247 1165,243 1173,245 1182,239 1193,245 1215,231 1255,222 1272,213 1300,203 1317,204"/>
                    </g>
                    <g fill="none" stroke="#2f9a26">
                        <polyline vector-effect="non-scaling-stroke" transform="translate(0 610) scale(.408163 .333333)" points="126,560 127,300 129,265 131,310 133,262 137,230 141,202 143,199 149,209 158,211 168,211 176,207 185,209 188,206 200,212 210,208 220,214 235,222 250,232 270,243 290,250 305,243 315,221 322,220 329,215 337,224 341,221 350,229 367,226 373,221 385,220 391,216 430,215 437,211 450,211 456,213 470,211 485,213 492,211 500,214 520,211 545,215 558,213 572,206 585,203 612,205 628,211 645,215 658,221 672,218 690,212 700,214 715,229 730,242 745,252 760,251 780,249 800,241 820,233 840,223 850,218 880,222 900,226 912,230 935,237 943,231 950,217 960,227 966,218 974,229 980,220 995,218 1010,211 1030,213 1048,212 1062,220 1085,225 1130,223 1150,226 1180,223 1205,219 1240,218 1260,228 1290,229 1310,225 1330,221 1345,214 1358,211 1375,214 1387,219 1400,211 1415,209 1421,222"/>
                        <polyline vector-effect="non-scaling-stroke" transform="translate(560 610) scale(.333333)" points="60,222 63,240 66,270 68,280 72,270 76,255 84,252 96,261 102,258 110,238 122,240 130,258 138,275 146,299 149,290 154,262 165,255 174,239 180,238 190,229 210,226 235,219 250,217 270,222 290,223 305,225 320,238 334,251 342,242 352,227 380,229 392,223 402,205 413,185 425,186 435,199 450,208 470,214 485,219 498,237 507,240 515,264 520,235 526,222 538,238 546,229 553,226 559,238 570,229 585,222 600,218 615,218 640,215 660,209 690,211 708,217 720,228 732,240 738,270 745,299 752,280 766,259 795,260 820,240 835,247 855,258 870,266 885,258 910,240 935,224 960,211 980,209 990,199 998,185 1005,189 1015,186 1025,197 1037,203 1045,198 1053,189 1068,193 1079,209 1092,205 1115,209 1130,217 1146,223 1180,220 1220,223 1250,226 1270,215 1290,216 1320,229"/>
                        <polyline vector-effect="non-scaling-stroke" transform="translate(1000 610) scale(.333333)" points="0,229 30,230 60,229 80,225 110,225 130,220 155,222 175,219 190,223 210,221 225,223 250,218 262,211 275,207 295,210 315,217 355,217 375,226 395,237 412,241 432,234 445,237 460,245 480,255 514,266 535,257 548,250 565,217 573,211 583,217 595,210 608,208 622,199 655,198 672,203 683,217 690,213 705,223 712,219 725,202 765,204 785,212 803,227 814,210 825,229 835,225 850,226 862,220 878,222 900,217 925,219 968,216 980,220 1015,226 1027,220 1045,223 1085,220 1100,222 1125,219 1145,215 1160,218 1180,218 1200,222 1225,233 1250,248 1275,257 1317,259"/>
                    </g>
                    <path d="M1493 974l7-7M1495.500 974l4.500-4.500M1498 974l2-2" stroke="#333"/>
                </svg>
            </section>
        </div>

        <div class="w-3 shrink-0 bg-[#f0f0f0] px-[3px] pt-[3px]"><div class="h-[213px] rounded-full bg-[#cbcbcb]"></div></div>

        <aside class="w-[323px] shrink-0 flex flex-col bg-[#f0f0f0]">
            <div class="flex h-[398px] shrink-0 border-b border-[#c3c6d8]">
                <div class="w-[311px]">
                    <section class="h-[385px] overflow-hidden bg-white">
                        <h2 class="pt-4 pb-[5px] text-center text-xl leading-6 font-extralight">Entire Workout</h2>
                        <div class="h-1 bg-radial-[50%_100%_at_50%_0%] from-[#d8d8d8] to-white"></div>
                        <div class="mt-[18px] ml-[26px] flex text-[11px] leading-[13px] text-center">
                            <div class="w-[100px]">Duration<div class="text-[27px] leading-6 font-extralight">50:01.63</div></div>
                            <div class="ml-4 w-[84px]">Distance<div class="text-[27px] leading-6 font-extralight whitespace-nowrap">9.34<span class="ml-1 text-sm font-normal">km</span></div></div>
                            <div class="ml-[22px] w-[30px]">TSS<div class="text-[27px] leading-6 font-extralight">52</div></div>
                        </div>
                        <div class="mt-[17px] flex text-[11px] leading-[21px] whitespace-nowrap">
                            <div class="w-[79px] pr-2.5 text-right">Work<br>IF<br>EF<br>Grade<br>VAM</div>
                            <div class="w-[84px] pl-[9px] border-l border-[#c3c6d8]">820 <span class="text-[10px]">kJ</span><br>0.75<br>0.02<br>--<br>85 <span class="text-[10px]">m/h</span></div>
                            <div class="w-[79px] pr-2.5 text-right">NGP<br>Pa:Hr<br>El. Gain<br>El. Loss<br>W/kg</div>
                            <div class="pl-[9px] border-l border-[#c3c6d8]">05:19 <span class="text-[7px]">min/km</span><br>8.21%<br>71 <span class="text-[10px]">m</span><br>69 <span class="text-[10px]">m</span><br>3.17</div>
                        </div>
                        <hr class="mt-[18px] mx-2.5 border-[#c3c6d8]">
                        <table class="mt-3 w-full table-fixed text-center text-xs">
                            <colgroup><col class="w-[79px]"><col class="w-[55px]"><col class="w-[54px]"><col class="w-[54px]"><col></colgroup>
                            <thead><tr class="h-[26px] text-[11px]"><th></th><th class="font-normal">MIN</th><th class="font-normal">AVG</th><th class="font-normal">MAX</th><th></th></tr></thead>
                            <tbody>
                                <tr class="h-[25px]"><th class="pr-2.5 text-right text-[11px] font-normal border-r border-[#c3c6d8]">Power</th><td>79</td><td>273</td><td>361</td><td class="pl-2 text-left text-[10px] border-l border-[#c3c6d8]">W</td></tr>
                                <tr class="h-[25px]"><th class="pr-2.5 text-right text-[11px] font-normal border-r border-[#c3c6d8]">Heart Rate</th><td>68</td><td>128</td><td>145</td><td class="pl-2 text-left text-[10px] border-l border-[#c3c6d8]">bpm</td></tr>
                                <tr class="h-[25px]"><th class="pr-2.5 text-right text-[11px] font-normal border-r border-[#c3c6d8]">Cadence</th><td>73</td><td>166</td><td>169</td><td class="pl-2 text-left text-[10px] border-l border-[#c3c6d8]">rpm</td></tr>
                                <tr class="h-[25px]"><th class="pr-2.5 text-right text-[11px] font-normal border-r border-[#c3c6d8]">Speed</th><td>0.00</td><td>11.2</td><td>11.9</td><td class="pl-2 text-left text-[10px] border-l border-[#c3c6d8]">kph</td></tr>
                            </tbody>
                        </table>
                    </section>
                    <div class="pt-[3px] pl-[3px]"><div class="w-[303px] h-1.5 rounded-full bg-[#cbcbcb]"></div></div>
                </div>
                <div class="w-3 px-[3px] pt-[3px]"><div class="h-[318px] rounded-full bg-[#cbcbcb]"></div></div>
            </div>
            <div class="flex-1 min-h-0 flex">
                <section class="w-[311px] overflow-hidden bg-white">
                    <div class="mt-[15px] ml-[34px] flex gap-2.5 text-[#55565c]">
                        <button aria-label="Laps" class="w-9 h-9 flex items-center justify-center rounded bg-[#f0f0f0]"><svg class="w-6 h-6" viewBox="0 0 24 24" fill="none" stroke="currentColor" stroke-width="2.400"><path d="M1.200 1.200h21.600v21.600H1.200zM5.500 7H8M10.500 7h8M5.500 12H8M10.500 12h8M5.500 17H8M10.500 17h8"/></svg></button>
                        <button aria-label="Heart rate" class="w-9 h-9 flex items-center justify-center"><svg class="w-6 h-[21px]" viewBox="0 0 24 21" fill="currentColor"><path d="M12 21C4 14.500 0 11 0 6.500 0 2.800 2.800 0 6.500 0 8.700 0 10.800 1 12 2.700 13.200 1 15.300 0 17.500 0 21.200 0 24 2.800 24 6.500 24 11 20 14.500 12 21z"/></svg></button>
                        <button aria-label="Power" class="w-9 h-9 flex items-center justify-center"><svg class="w-[13px] h-6" viewBox="0 0 13 24" fill="currentColor"><path d="M8.500 0 0 13.500h5.300L3.800 24 13 10H7.800L9.500 0z"/></svg></button>
                        <button aria-label="Pace" class="w-9 h-9 flex items-center justify-center"><svg class="w-6 h-6" viewBox="0 0 24 24"><circle cx="12" cy="12" r="12" fill="currentColor"/><path d="M12 5v7.500l4.500 4.500" fill="none" stroke="#fff" stroke-width="2"/></svg></button>
                        <button aria-label="Cadence" class="w-9 h-9 flex items-center justify-center"><svg class="w-6 h-6" viewBox="0 0 24 24" fill="none" stroke="currentColor" stroke-width="2.600"><path d="M9 22.500A9.600 9.600 0 0 1 11.500 4H13"/><path d="M11 0l6 4-6 5z" fill="currentColor" stroke="none"/><path d="M20 7l1.500 2.500M21.800 13.500 21 17M17.500 20.500l-3 2"/></svg></button>
                        <button aria-label="Distance" class="w-9 h-9 flex items-center justify-center"><svg class="w-[23px] h-3" viewBox="0 0 23 12" fill="none" stroke="currentColor"><rect x="1" y="1" width="21" height="10" rx="1" stroke-width="2"/><path d="M5 1v5M8.500 1v5M12 1v5M15.500 1v5M19 1v5" stroke-width="1.500"/></svg></button>
                    </div>
                    <h3 class="mt-1.5 pl-6 text-center text-base leading-6">Laps</h3>
                    <table class="mt-[11px] w-full">
                        <tbody><tr class="h-[26px] border-b border-[#c3c6d8]">
                            <td class="w-[33px] pl-2.5 pb-1"><input type="checkbox" id="lap0" class="block w-3.5 h-3.5 appearance-none rounded-[3px] border border-[#767676] bg-white"></td>
                            <td class="w-[143px] pt-0.5 text-xs"><label for="lap0">Entire Workout</label></td>
                            <td class="text-sm">50:01.63</td>
                        </tr></tbody>
                    </table>
                    <table class="mt-[5px] w-full h-[276px]"><tbody id="laps"></tbody></table>
                </section>
                <div class="w-3 px-[3px] pt-[3px]"><div class="h-[307px] rounded-full bg-[#cbcbcb]"></div></div>
            </div>
        </aside>
        <div class="w-3 shrink-0 bg-[#f0f0f0] px-[3px] pt-[2px] pb-1"><div class="h-full rounded-full bg-[#cbcbcb]"></div></div>
    </main>

    <footer class="shrink-0 h-[53px] flex items-start border-t border-[#d9dbe6] pl-2.5 pr-4">
        <input type="checkbox" id="public" class="mt-[26px] w-3.5 h-3.5 appearance-none rounded-[3px] border border-[#767676] bg-white">
        <label for="public" class="ml-1 mt-[26px] text-xs leading-4">Public</label>
        <div class="ml-1.5 mt-[21px] flex gap-[5px]">
            <a href="#" aria-label="Twitter" class="w-[21px] h-[21px] flex items-center justify-center bg-[#8fd2f8]"><svg class="w-[15px] h-[15px]" viewBox="0 0 24 24" fill="#fff"><path d="M24 4.600a10 10 0 0 1-2.800.8 5 5 0 0 0 2.100-2.700 10 10 0 0 1-3.100 1.200 4.900 4.900 0 0 0-8.400 4.500A14 14 0 0 1 1.700 3.100a4.900 4.900 0 0 0 1.500 6.600 5 5 0 0 1-2.200-.6 4.900 4.900 0 0 0 3.900 4.900 5 5 0 0 1-2.200.1 4.900 4.900 0 0 0 4.600 3.400A10 10 0 0 1 0 19.500 14 14 0 0 0 21.500 7.100 10 10 0 0 0 24 4.600z"/></svg></a>
            <a href="#" aria-label="Facebook" class="w-[21px] h-[21px] flex items-end justify-end pr-[3px] bg-[#9ab2cd]"><svg class="w-2.5 h-[17px]" viewBox="0 0 10 17" fill="#fff"><path d="M3 17V9.500H0v-3h3V4C3 1.400 4.500 0 7 0h3v3H8C7 3 6.500 3.400 6.500 4.200v2.300h3.300l-.5 3H6.500V17z"/></svg></a>
            <a href="#" aria-label="Copy link" class="w-[21px] h-[21px] flex items-center justify-center bg-[#8db8d2]"><svg class="w-[13px] h-[13px]" viewBox="0 0 24 24" fill="none" stroke="#fff" stroke-width="2.600" stroke-linecap="round"><path d="M10 13a5 5 0 0 0 7.500.5l4-4a5 5 0 0 0-7-7L12 5M14 11a5 5 0 0 0-7.500-.5l-4 4a5 5 0 0 0 7 7L12 19"/></svg></a>
            <a href="#" aria-label="Email" class="w-[21px] h-[21px] flex items-center justify-center bg-[#97e3c3]"><svg class="w-[13px] h-[9px]" viewBox="0 0 13 9"><path d="M0 0h13v9H0z" fill="#fff"/><path d="M0 .5l6.500 5 6.500-5M0 8.500l4.500-4.500M13 8.500L8.500 4" fill="none" stroke="#97e3c3"/></svg></a>
        </div>
        <div class="ml-auto mt-3 flex items-center text-sm text-[#1a40f0]">
            <button class="pt-0.5">Delete</button>
            <button class="ml-[38px] pt-0.5">Cancel</button>
            <button class="ml-[38px] pt-0.5">Save</button>
            <button class="ml-[23px] h-8 w-[117px] pt-0.5 rounded bg-[#1a40f0] text-white">Save &amp; Close</button>
        </div>
    </footer>

    <script>
        const laps = ['05:19.76', '05:20.15', '05:20.26', '05:24.80', '05:20.26', '05:23.27', '05:19.74', '05:21.95', '05:19.24', '01:50.58'];
        document.getElementById('laps').innerHTML = laps.map((time, i) => `
            <tr>
                <td class="w-[33px] pl-2.5 pb-1"><input type="checkbox" id="lap${i + 1}" class="block w-3.5 h-3.5 appearance-none rounded-[3px] border border-[#767676] bg-white"></td>
                <td class="w-[143px] pt-0.5 text-xs"><label for="lap${i + 1}">Lap #${i + 1}</label></td>
                <td class="text-sm">${time}</td>
            </tr>`).join('');

        // road number, centre x, centre y, main road
        const shields = [
            ['416', 185, 227, true], ['416', 120, 307, true], ['416', 20, 461, true], ['54', 422, 293, true], ['54', 473, 452, true],
            ['4194', 316, 341], ['4194', 187, 371], ['4165', 24, 532], ['4196', 546, 428], ['4199', 663, 453],
            ['41916', 785, 422], ['41915', 741, 484], ['0507', 994, 373], ['0507', 1066, 229],
            ['50', 792, 227, true], ['431', 1128, 246, true], ['50', 1320, 300, true], ['431', 1187, 408, true], ['431', 1219, 567, true], ['50', 1157, 221, true]
        ];
        document.getElementById('shields').innerHTML = shields.map(([n, x, y, main]) => {
            const w = main ? n.length * 6 + 6 : n.length * 6 + 7;
            return `<rect x="${x - w / 2}" y="${y - 6.5}" width="${w}" height="13" rx="2" fill="${main ? '#6478c0' : '#fff'}" stroke="${main ? '#fff' : '#5a6596'}"/>
                <text x="${x}" y="${y + 3}" fill="${main ? '#fff' : '#4c5784'}">${n}</text>`;
        }).join('');

        const splits = [[5, 769, 252], [4, 776, 271], [6, 783, 312], [3, 781, 334], [7, 766, 389], [2, 754, 407], [8, 738, 457], [1, 743, 478], [9, 724, 531]];
        document.getElementById('splits').innerHTML = splits.map(([n, x, y]) => `
            <rect x="${x - 8.5}" y="${y - 7.5}" width="17" height="16" fill="#ececec" stroke="#a9a9a9"/>
            <text x="${x}" y="${y + 3}" fill="#1a2df0">${n}</text>`).join('');
    </script>
</body>
</html>
